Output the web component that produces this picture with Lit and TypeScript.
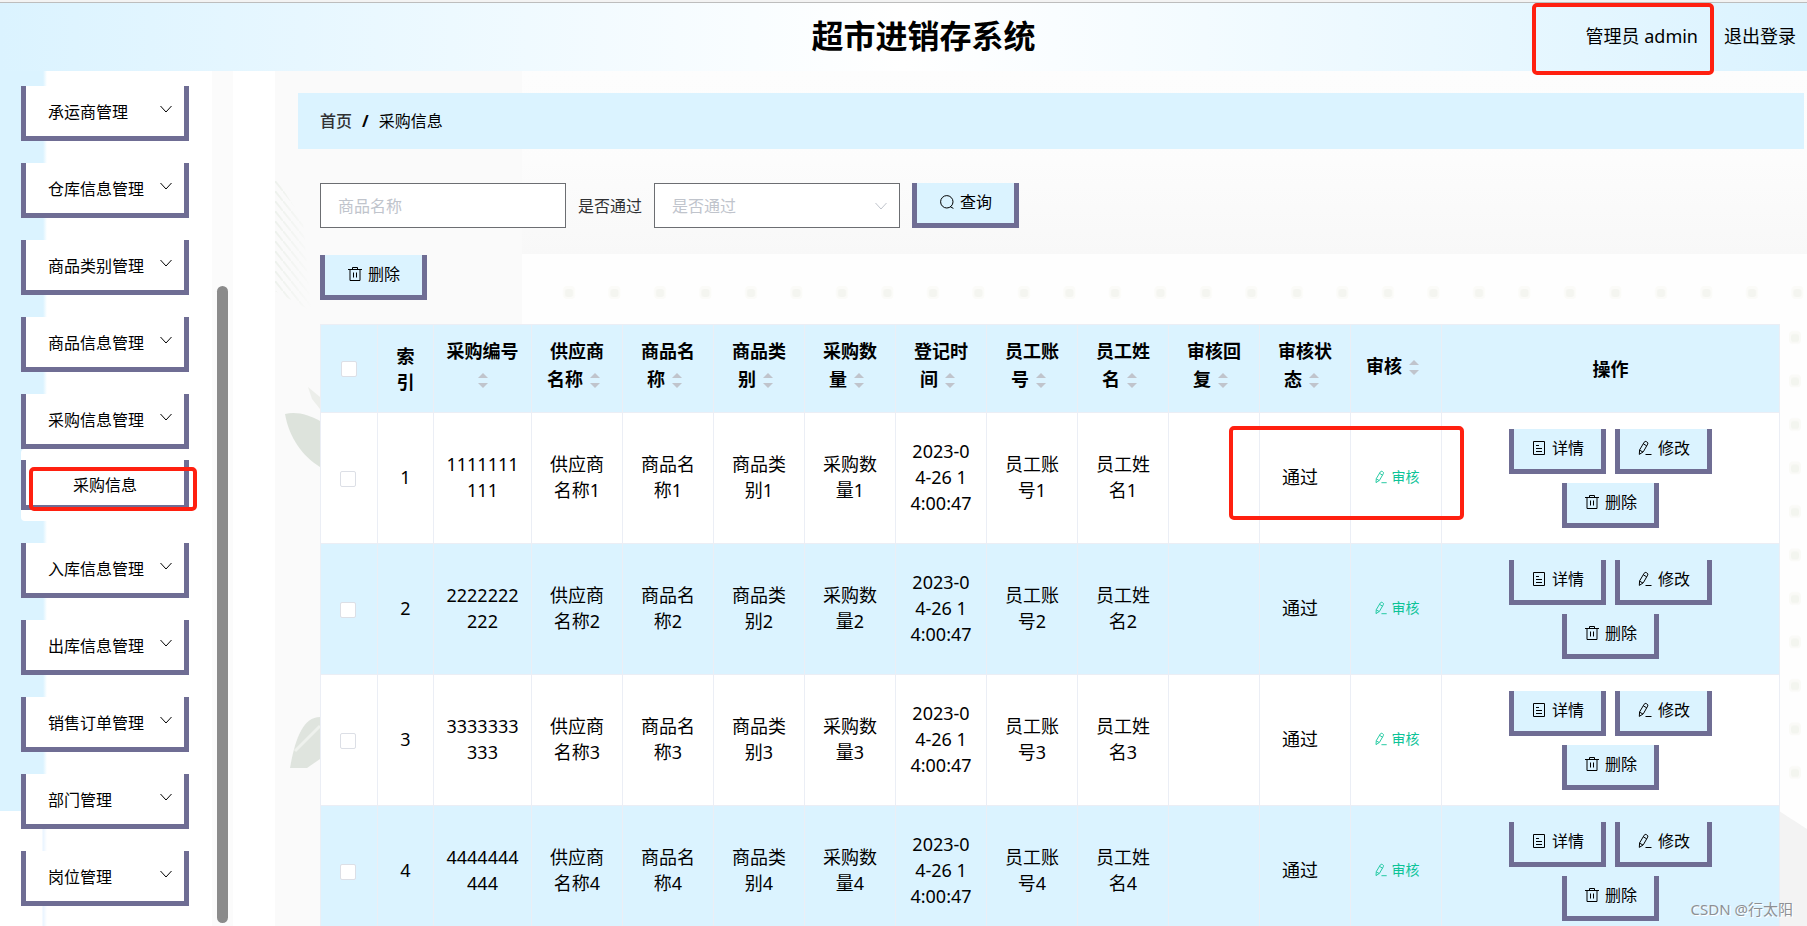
import { LitElement, html, css, svg } from "lit";
import { customElement } from "lit/decorators.js";

const icons = {
  chevron: svg`<path d="M2.5 5l5.5 6 5.5-6" />`,
  search: svg`<circle cx="7.8" cy="7.8" r="6.2" /><path d="M11.4 12.8l3 1.6" />`,
  trash: svg`<path d="M1 3.5h14M5.5 3.5v-2h5v2M3 3.5v11h10v-11M6.5 6.5v5M9.5 6.5v5" />`,
  detail: svg`<path d="M2.5 1.5h11v13h-11zM5 5.5h3M5 8.5h6M5 11.5h6" />`,
  edit: svg`<path d="M7.2 2.2Q8 .9 9.3 1.6l.8.5Q11.4 2.800 10.700 4.100L6.300 11.800 2.300 14.400 2.600 9.900zM6.400 3.900l3.300 1.900M2.700 10.200l3.300 1.900M8.500 14.500h6" />`,
};

const icon = (name: keyof typeof icons, cls = "icon") =>
  html`<svg class=${cls} viewBox="0 0 16 16" aria-hidden="true">${icons[name]}</svg>`;

const MENU = [
  { name: "承运商管理" },
  { name: "仓库信息管理" },
  { name: "商品类别管理" },
  { name: "商品信息管理" },
  { name: "采购信息管理", child: "采购信息" },
  { name: "入库信息管理" },
  { name: "出库信息管理" },
  { name: "销售订单管理" },
  { name: "部门管理" },
  { name: "岗位管理" },
];

const SORTED = [
  "采购编号", "供应商名称", "商品名称", "商品类别", "采购数量",
  "登记时间", "员工账号", "员工姓名", "审核回复", "审核状态", "审核",
];

const ROWS = [1, 2, 3, 4].map((n) => ({
  n,
  code: String(n).repeat(10),
  texts: ["供应商名称", "商品名称", "商品类别", "采购数量"].map((t) => t + n),
  time: ["2023-0", "4-26 1", "4:00:47"],
  staff: ["员工账号", "员工姓名"].map((t) => t + n),
}));

@customElement("app-root")
export class AppRoot extends LitElement {
  static styles = css`
    :host {
      display: flex;
      flex-direction: column;
      position: relative;
      height: 100vh;
      overflow: hidden;
      background: #fff;
      color: #000;
      font-family: "Noto Sans", "Noto Sans CJK SC", sans-serif;
      font-size: 16px;
      line-height: 24px;
    }
    * { box-sizing: border-box; }
    button, input, select { font: inherit; color: inherit; margin: 0; border-radius: 0; }
    button { cursor: pointer; }
    a { color: inherit; text-decoration: none; }
    .icon, .arrow {
      width: 16px; height: 16px; flex: none;
      fill: none; stroke: currentColor; stroke-width: 1;
    }

    .top {
      flex: none;
      display: grid;
      grid-template-columns: 1fr auto 1fr;
      align-items: center;
      height: 69px;
      margin-top: 2px;
      padding: 0 11px 2px 51px;
      border-top: 1px solid #bdbdbd;
      box-shadow: 0 -2px 0 #f3f3f3;
      background: linear-gradient(90deg, #dbf3ff, #fff 50%, #dbf3ff);
    }
    .title { grid-column: 2; margin: 0; font-size: 32px; line-height: 40px; font-weight: 700; }
    .user { display: flex; justify-content: flex-end; gap: 26px; font-size: 18px; }

    .body { flex: 1; min-height: 0; display: flex; }
    .side {
      flex: none; width: 275px; display: flex;
      background:
        linear-gradient(90deg, #dbf3ff 43px, #fff 47px) 0 0 / 100% 740px no-repeat,
        linear-gradient(90deg, #fff 42px, #e9f4ff 43px, #fff 47px);
    }
    .menu {
      flex: none; width: 212px; margin: 0; padding: 15px 23px 0 21px;
      list-style: none; display: flex; flex-direction: column; gap: 22px;
    }
    .item, .child {
      display: flex; align-items: center; justify-content: space-between;
      width: 100%; height: 55px; padding: 1px 10px 0 22px;
      background: #fff; border: 5px solid #6f6d94; border-top: 0;
      text-align: left;
    }
    .item .arrow { margin-bottom: 5px; }
    .sub { padding: 11px 0; background: #fff; border-radius: 4px; }
    .child { height: 50px; padding: 4px 47px 0; }
    .track { flex: none; width: 21px; padding: 215px 5px 3px; background: #fbfbfb; display: flex; }
    .thumb { flex: 1; border-radius: 6px; background: #8b8b8b; }

    .main { flex: 1; min-width: 0; position: relative; background: #fafafa; overflow: hidden; }
    .decor { position: absolute; inset: 0; width: 100%; height: 100%; }
    .crumbs {
      position: relative; display: flex; align-items: center; gap: 10px;
      height: 56px; margin: 22px 3px 0 23px; padding: 0 22px; background: #dbf3ff;
    }
    .home { font-weight: 500; color: #303133; }
    .slash { font-weight: 700; }
    .content { position: relative; padding: 34px 27px 0 45px; }
    .search { display: flex; align-items: center; gap: 12px; margin-bottom: 27px; color: #303133; }
    .field {
      width: 246px; height: 45px; padding: 0 17px;
      border: 1px solid #6c6e72; background: #fff; outline: 0;
    }
    .field::placeholder { color: #c0c4cc; opacity: 1; }
    .pick { position: relative; display: flex; align-items: center; }
    .pick .field { appearance: none; color: #c0c4cc; }
    .pick .arrow { position: absolute; right: 11px; color: #c0c4cc; pointer-events: none; }
    .btn {
      display: inline-flex; align-items: center; justify-content: center; gap: 5px;
      height: 45px; padding: 0 17px 2px;
      background: #dbf3ff; color: #000; border: 5px solid #6f6d94; border-top: 0;
    }
    .btn.wide { padding: 0 22px 2px; }

    .grid {
      width: 100%; margin-top: 24px; table-layout: fixed;
      border-collapse: separate; border-spacing: 0;
      border: 1px solid #ebeef5; border-bottom: 0;
      background: #fff; font-size: 18px; line-height: 26px;
      text-align: center; word-break: break-all;
    }
    .c-check { width: 57px; }
    .c-index { width: 56px; }
    .c-code { width: 98px; }
    .c-text { width: 91px; }
    .grid th, .grid td {
      padding: 0 12px; border-right: 1px solid #ebeef5; border-bottom: 1px solid #ebeef5;
    }
    .grid th:last-child, .grid td:last-child { border-right: 0; }
    .grid th { height: 88px; background: #dbf3ff; font-weight: 700; }
    .grid th.index { padding: 0 18px; }
    .grid th.sorted { padding-bottom: 2px; }
    .grid td { height: 131px; padding-bottom: 2px; }
    .grid tr:nth-child(even) td { background: #dbf3ff; }
    .grid td.state { padding-right: 22px; }
    .sort {
      display: inline-flex; flex-direction: column; align-items: center; justify-content: center;
      gap: 5px; width: 24px; height: 34px; vertical-align: middle;
    }
    .up, .down { border: 5px solid transparent; height: 0; }
    .up { border-top: 0; border-bottom-color: #c0c4cc; }
    .down { border-bottom: 0; border-top-color: #c0c4cc; }
    .tick {
      display: block; appearance: none; width: 16px; height: 16px; margin: 0 auto;
      border: 1px solid #dcdfe6; border-radius: 2px; background: #fff;
    }
    .grid td.check { padding: 2px 15px 0 12px; }
    .grid td.act { padding: 0 12px; }
    .audit {
      display: inline-flex; align-items: center; gap: 4px; padding: 0 0 2px 1px;
      border: 0; background: none; color: #0cc397; font-size: 14px; line-height: 20px;
    }
    .audit .icon { width: 14px; height: 14px; }
    .ops { display: flex; flex-wrap: wrap; justify-content: center; gap: 9px; width: 220px; margin: 0 auto; font-size: 16px; }

    .mark { position: absolute; border: 4px solid #ff2010; border-radius: 5px; pointer-events: none; }
    .mark-user { top: 3px; right: 93px; width: 182px; height: 72px; }
    .mark-menu { top: 467px; left: 29px; width: 168px; height: 44px; }
    .mark-audit { top: 426px; left: 1229px; width: 235px; height: 94px; }
    .credit {
      position: absolute; right: 14px; bottom: 5px; font-size: 15px;
      color: #8d9094; text-shadow: 1px 1px 0 #fff;
    }
  `;

  private decor() {
    return html`<svg class="decor" aria-hidden="true">
      <defs>
        <pattern id="row" x="271" y="199" width="45.5" height="46" patternUnits="userSpaceOnUse">
          <rect x="17" y="16" width="12" height="13" rx="4" fill="#fbfbf8" />
          <rect x="19" y="19" width="8" height="8" rx="3" fill="#f4f5f0" />
        </pattern>
        <pattern id="col" x="-24" y="244" width="24" height="43.5" patternUnits="userSpaceOnUse">
          <rect x="6" y="16" width="12" height="13" rx="4" fill="#fafaf7" />
          <rect x="8" y="19" width="8" height="8" rx="3" fill="#f3f5ef" />
        </pattern>
        <pattern id="hatch" width="8" height="10" patternUnits="userSpaceOnUse">
          <path d="M0 0l8 10" stroke="#edf1ec" stroke-width="2" />
        </pattern>
        <linearGradient id="soft">
          <stop offset="0" stop-color="#fafafa" stop-opacity="0" />
          <stop offset="1" stop-color="#fafafa" />
        </linearGradient>
        <linearGradient id="tone" x2="0" y2="1">
          <stop offset="0" stop-color="#fdfdfd" />
          <stop offset="0.5" stop-color="#fcfcfc" />
          <stop offset="1" stop-color="#f8f8f8" />
        </linearGradient>
      </defs>
      <rect x="247" width="100%" height="183" fill="url(#tone)" />
      <rect x="247" y="183" width="100%" height="100%" fill="#fefefe" />
      <rect x="271" y="199" width="100%" height="46" fill="url(#row)" />
      <path d="M0 105L28 150L36 240L0 220Z" fill="url(#hatch)" />
      <rect x="0" y="100" width="38" height="145" fill="url(#soft)" />
      <path d="M10 343C22 340 34 344 45 350V396C27 385 14 366 10 343Z" fill="#dde3dc" />
      <path d="M33 316l12 10v12l-8-10z" fill="#eceeea" />
      <path d="M45 646C28 646 20 668 15 697H32L45 688Z" fill="#dfe4de" />
      <path d="M20 680L45 655" stroke="#eef1ed" stroke-width="3" />
      <svg x="100%" overflow="visible">
        <rect x="-24" y="244" width="24" height="490" fill="url(#col)" />
        <path d="M-28 740L0 758V900H-28Z" fill="#f3f3f3" />
      </svg>
    </svg>`;
  }

  render() {
    return html`
      <header class="top">
        <h1 class="title">超市进销存系统</h1>
        <div class="user"><span>管理员 admin</span><a href="#logout">退出登录</a></div>
      </header>
      <div class="body">
        <nav class="side">
          <ul class="menu">
            ${MENU.map((m) => html`<li>
              <button class="item">${m.name}${icon("chevron", "arrow")}</button>
              ${m.child ? html`<div class="sub"><button class="child">${m.child}</button></div>` : null}
            </li>`)}
          </ul>
          <div class="track"><div class="thumb"></div></div>
        </nav>
        <main class="main">
          ${this.decor()}
          <div class="crumbs">
            <a class="home" href="#home">首页</a><span class="slash">/</span><span>采购信息</span>
          </div>
          <div class="content">
            <form class="search" @submit=${(e: Event) => e.preventDefault()}>
              <input class="field" type="text" placeholder="商品名称" aria-label="商品名称" />
              <label for="passed">是否通过</label>
              <span class="pick">
                <select class="field" id="passed">
                  <option value="">是否通过</option>
                </select>
                ${icon("chevron", "arrow")}
              </span>
              <button class="btn wide">${icon("search")}查询</button>
            </form>
            <button class="btn wide">${icon("trash")}删除</button>
            <table class="grid">
              <colgroup>
                <col class="c-check" /><col class="c-index" /><col class="c-code" />
                ${SORTED.slice(1).map(() => html`<col class="c-text" />`)}
                <col />
              </colgroup>
              <thead>
                <tr>
                  <th><input class="tick" type="checkbox" aria-label="全选" /></th>
                  <th class="index">索引</th>
                  ${SORTED.map((t) => html`<th class="sorted">${t}<span class="sort"><i class="up"></i><i class="down"></i></span></th>`)}
                  <th>操作</th>
                </tr>
              </thead>
              <tbody>
                ${ROWS.map((r) => html`<tr>
                  <td class="check"><input class="tick" type="checkbox" aria-label=${"选择" + r.n} /></td>
                  <td>${r.n}</td>
                  <td>${r.code}</td>
                  ${r.texts.map((t) => html`<td>${t}</td>`)}
                  <td>${r.time[0]}<br />${r.time[1]}<br />${r.time[2]}</td>
                  ${r.staff.map((t) => html`<td>${t}</td>`)}
                  <td></td>
                  <td class="state">通过</td>
                  <td><button class="audit">${icon("edit")}审核</button></td>
                  <td class="act">
                    <div class="ops">
                      <button class="btn">${icon("detail")}详情</button>
                      <button class="btn">${icon("edit")}修改</button>
                      <button class="btn">${icon("trash")}删除</button>
                    </div>
                  </td>
                </tr>`)}
              </tbody>
            </table>
          </div>
        </main>
      </div>
      <div class="mark mark-user"></div>
      <div class="mark mark-menu"></div>
      <div class="mark mark-audit"></div>
      <div class="credit">CSDN @行太阳</div>
    `;
  }
}
